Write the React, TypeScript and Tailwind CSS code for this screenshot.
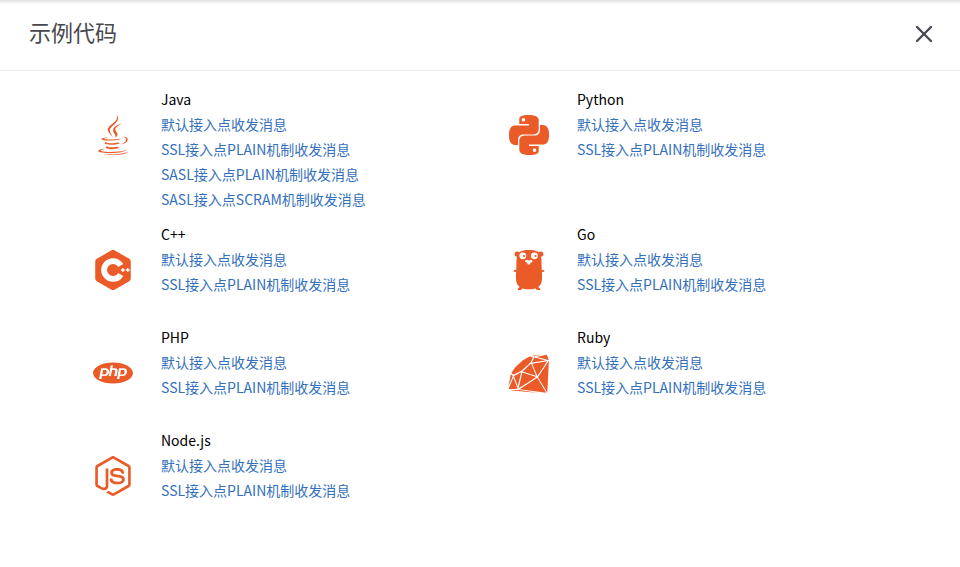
import type { ReactNode } from 'react';
import { X } from 'lucide-react';
import { DiRuby } from 'react-icons/di';
import { FaJava } from 'react-icons/fa';
import { SiCplusplus, SiNodedotjs, SiPhp, SiPython } from 'react-icons/si';

function Gopher() {
  return (
    <svg viewBox="0 0 40 40" width="40" height="40" aria-hidden="true">
      <g fill="currentColor">
        <circle cx="8.2" cy="4" r="2.6" />
        <circle cx="31.8" cy="4" r="2.6" />
        <ellipse cx="6.4" cy="21" rx="1.9" ry="1.1" />
        <ellipse cx="33.6" cy="21" rx="1.9" ry="1.1" />
        <ellipse cx="11" cy="38.8" rx="2.6" ry="1.6" transform="rotate(-38 11 38.8)" />
        <ellipse cx="29" cy="38.8" rx="2.6" ry="1.6" transform="rotate(38 29 38.8)" />
        <path d="M20 0C13 0 9.600 1.600 8.200 5.400 7.200 8.600 7.500 12 7.400 15.500c-.1 5-.6 9-.4 13.500.3 7 4.500 10.300 13 10.300S32.700 36 33 29c.2-4.500-.3-8.500-.4-13.500-.1-3.500.2-6.900-.8-10.100C30.400 1.600 27 0 20 0Z" />
      </g>
      <g fill="#fff">
        <circle cx="13.800" cy="5.800" r="3.400" />
        <circle cx="25.400" cy="5.800" r="3.400" />
        <ellipse cx="18.200" cy="11.200" rx="2" ry="1.400" />
        <ellipse cx="21.400" cy="11.200" rx="2" ry="1.400" />
        <rect x="18.300" y="11.200" width="3" height="3.400" rx=".8" />
      </g>
      <g fill="currentColor">
        <circle cx="15" cy="6" r="1.100" />
        <circle cx="26.600" cy="6" r="1.100" />
        <ellipse cx="19.800" cy="9.500" rx="1.600" ry="1" />
      </g>
    </svg>
  );
}

const plainLinks = ['默认接入点收发消息', 'SSL接入点PLAIN机制收发消息'];

const samples: { name: string; icon: ReactNode; links: string[] }[] = [
  {
    name: 'Java',
    icon: <FaJava size={40} />,
    links: [...plainLinks, 'SASL接入点PLAIN机制收发消息', 'SASL接入点SCRAM机制收发消息'],
  },
  { name: 'Python', icon: <SiPython size={40} />, links: plainLinks },
  { name: 'C++', icon: <SiCplusplus size={40} />, links: plainLinks },
  { name: 'Go', icon: <Gopher />, links: plainLinks },
  { name: 'PHP', icon: <SiPhp size={40} />, links: plainLinks },
  { name: 'Ruby', icon: <DiRuby size={46} />, links: plainLinks },
  { name: 'Node.js', icon: <SiNodedotjs size={40} />, links: plainLinks },
];

export default function App() {
  return (
    <div
      role="dialog"
      aria-labelledby="dialog-title"
      className="min-h-screen bg-white font-['Noto_Sans_CJK_SC',sans-serif] text-black"
    >
      <div className="h-1 bg-linear-to-b from-[#dfdfe1] to-white" />
      <header className="flex items-center justify-between border-b border-[#ebebed] pt-3 pr-[22px] pb-[18px] pl-[29px]">
        <h1 id="dialog-title" className="pb-[6px] text-[22px] leading-[30px] text-[#48484c]">
          示例代码
        </h1>
        <button type="button" aria-label="关闭" className="text-[#484854]">
          <X size={28} strokeWidth={2} />
        </button>
      </header>
      <main className="grid grid-cols-2 gap-y-[10px] px-16 pt-4">
        {samples.map((sample) => (
          <section key={sample.name} className="flex min-h-[93px] items-start gap-7 pl-[29px]">
            <div className="mt-7 flex size-10 shrink-0 items-center justify-center text-[#eb5b28]">
              <div className="shrink-0">{sample.icon}</div>
            </div>
            <div className="text-sm leading-[25px]">
              <h2>{sample.name}</h2>
              <ul>
                {sample.links.map((link) => (
                  <li key={link}>
                    <a href="#" className="text-[#3370bd] hover:underline">
                      {link}
                    </a>
                  </li>
                ))}
              </ul>
            </div>
          </section>
        ))}
      </main>
    </div>
  );
}
